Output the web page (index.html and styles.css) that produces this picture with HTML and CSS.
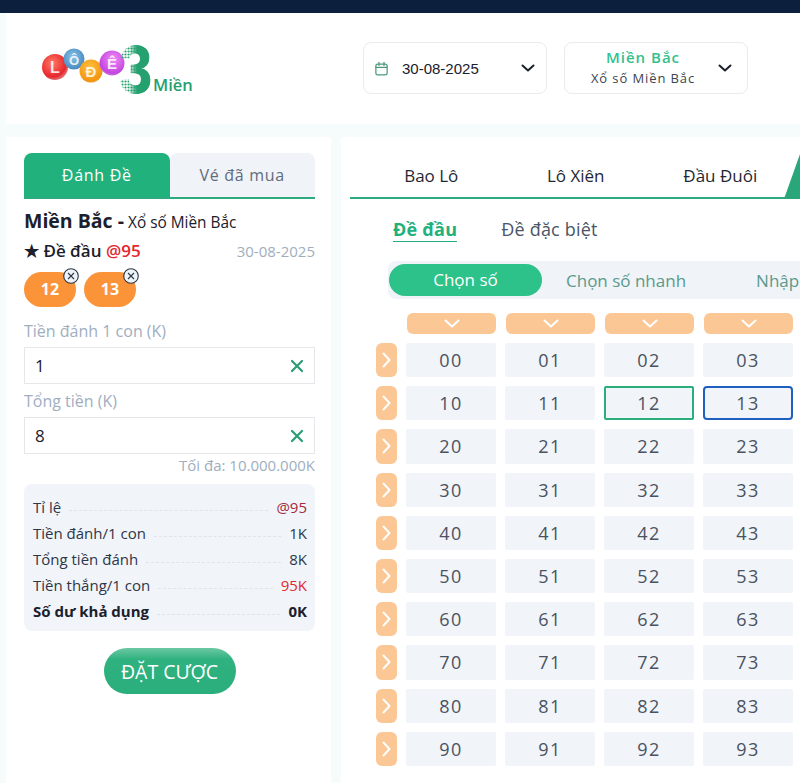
FILE: index.html
```html
<!DOCTYPE html>
<html lang="vi">
    <head>
        <meta charset="UTF-8" />
        <meta name="viewport" content="width=device-width, initial-scale=1.0" />
        <title>Lô Đề 3 Miền</title>
        <link rel="stylesheet" href="styles.css">
    </head>
    <body>
        <div class="topbar"></div>

        <header class="site-header">
            <svg class="logo" width="156" height="56" viewBox="0 0 156 56">
                <defs>
                    <pattern id="dots" width="3" height="3" patternUnits="userSpaceOnUse">
                        <circle cx="1.5" cy="1.5" r="1.1" fill="#25a06f" />
                    </pattern>
                    <linearGradient id="fade3" x1="0" x2="1" y1="0" y2="0">
                        <stop offset="0.3" stop-color="#25a06f" stop-opacity="0" />
                        <stop offset="0.55" stop-color="#25a06f" />
                    </linearGradient>
                    <radialGradient id="ballRed" cx="0.4" cy="0.35" r="0.75">
                        <stop offset="0" stop-color="#ff7a66" />
                        <stop offset="0.7" stop-color="#e8272d" />
                        <stop offset="1" stop-color="#d9a0a0" />
                    </radialGradient>
                    <radialGradient id="ballBlue" cx="0.45" cy="0.4" r="0.7">
                        <stop offset="0" stop-color="#8cc4e8" />
                        <stop offset="1" stop-color="#3b7fb8" />
                    </radialGradient>
                    <radialGradient id="ballOrange" cx="0.45" cy="0.35" r="0.75">
                        <stop offset="0" stop-color="#ffc23d" />
                        <stop offset="0.8" stop-color="#f29410" />
                        <stop offset="1" stop-color="#e8c08c" />
                    </radialGradient>
                    <radialGradient id="ballPink" cx="0.55" cy="0.35" r="0.75">
                        <stop offset="0" stop-color="#f08cf5" />
                        <stop offset="0.75" stop-color="#c344e0" />
                        <stop offset="1" stop-color="#d8b0e0" />
                    </radialGradient>
                </defs>
                <circle cx="15" cy="23" r="13" fill="url(#ballRed)" />
                <text x="15" y="29" class="ball-letter" font-size="16">L</text>
                <circle cx="34" cy="15" r="10.5" fill="url(#ballBlue)" />
                <text x="34" y="21" class="ball-letter" font-size="13">Ô</text>
                <circle cx="51" cy="27" r="11.5" fill="url(#ballOrange)" />
                <text x="51" y="33" class="ball-letter" font-size="15">Đ</text>
                <circle cx="72" cy="19" r="12.5" fill="url(#ballPink)" />
                <text x="72" y="25" class="ball-letter" font-size="15">Ê</text>
                <text x="79" y="49" class="logo-three" fill="url(#dots)" textLength="33" lengthAdjust="spacingAndGlyphs">3</text>
                <text x="79" y="49" class="logo-three solid" fill="url(#fade3)" stroke="url(#fade3)" textLength="33" lengthAdjust="spacingAndGlyphs">3</text>
                <text x="113" y="47" class="logo-mien">Miền</text>
            </svg>

            <div class="picker picker-date">
                <svg class="cal-icon" width="15" height="15" viewBox="0 0 24 24" fill="none" stroke="#4f9a7c" stroke-width="2" stroke-linecap="round">
                    <rect x="3" y="5" width="18" height="17" rx="3" />
                    <path d="M3 10h18M8 2v5M16 2v5" />
                </svg>
                <span class="date-value">30-08-2025</span>
                <svg class="chev" width="14" height="8" viewBox="0 0 14 8" fill="none" stroke="#1a202c" stroke-width="2" stroke-linecap="round" stroke-linejoin="round">
                    <path d="M1.5 1.5 7 6.5l5.5-5" />
                </svg>
            </div>

            <div class="picker picker-region">
                <div class="region-text">
                    <div class="region-name">Miền Bắc</div>
                    <div class="region-sub">Xổ số Miền Bắc</div>
                </div>
                <svg class="chev" width="14" height="8" viewBox="0 0 14 8" fill="none" stroke="#1a202c" stroke-width="2" stroke-linecap="round" stroke-linejoin="round">
                    <path d="M1.5 1.5 7 6.5l5.5-5" />
                </svg>
            </div>
        </header>

        <div class="content">
            <aside class="bet-panel">
                <div class="side-tabs">
                    <div class="side-tab active">Đánh Đề</div>
                    <div class="side-tab">Vé đã mua</div>
                </div>

                <div class="bet-title"><b>Miền Bắc -</b> <span>Xổ số Miền Bắc</span></div>
                <div class="bet-type">
                    <span>★ Đề đầu <em>@95</em></span>
                    <span class="bet-date">30-08-2025</span>
                </div>

                <div class="chips">
                    <div class="chip">12
                        <span class="chip-x"><svg width="16" height="16" viewBox="0 0 16 16" fill="#eef3f8" stroke="#2d3748" stroke-width="1.1"><circle cx="8" cy="8" r="7.3" /><path d="m5 5 6 6M11 5l-6 6" /></svg></span>
                    </div>
                    <div class="chip">13
                        <span class="chip-x"><svg width="16" height="16" viewBox="0 0 16 16" fill="#eef3f8" stroke="#2d3748" stroke-width="1.1"><circle cx="8" cy="8" r="7.3" /><path d="m5 5 6 6M11 5l-6 6" /></svg></span>
                    </div>
                </div>

                <label class="field-label">Tiền đánh 1 con (K)</label>
                <div class="field">
                    <span>1</span>
                    <svg width="14" height="14" viewBox="0 0 14 14" stroke="#2a9d74" stroke-width="2.2" stroke-linecap="round"><path d="m2 2 10 10M12 2 2 12" /></svg>
                </div>
                <label class="field-label second">Tổng tiền (K)</label>
                <div class="field">
                    <span>8</span>
                    <svg width="14" height="14" viewBox="0 0 14 14" stroke="#2a9d74" stroke-width="2.2" stroke-linecap="round"><path d="m2 2 10 10M12 2 2 12" /></svg>
                </div>
                <div class="max-note">Tối đa: 10.000.000K</div>

                <div class="summary">
                    <div class="summary-row"><span>Tỉ lệ</span><i></i><span class="rate">@95</span></div>
                    <div class="summary-row"><span>Tiền đánh/1 con</span><i></i><span>1K</span></div>
                    <div class="summary-row"><span>Tổng tiền đánh</span><i></i><span>8K</span></div>
                    <div class="summary-row"><span>Tiền thắng/1 con</span><i></i><span class="win">95K</span></div>
                    <div class="summary-row strong"><span>Số dư khả dụng</span><i></i><span>0K</span></div>
                </div>

                <button class="place-bet">ĐẶT CƯỢC</button>
            </aside>

            <main class="board">
                <nav class="game-tabs">
                    <div class="game-tab">Bao Lô</div>
                    <div class="game-tab">Lô Xiên</div>
                    <div class="game-tab">Đầu Đuôi</div>
                    <div class="game-tab-active"></div>
                </nav>

                <div class="sub-tabs">
                    <span class="sub-tab active">Đề đầu</span>
                    <span class="sub-tab">Đề đặc biệt</span>
                </div>

                <div class="modes">
                    <div class="mode active">Chọn số</div>
                    <div class="mode quick">Chọn số nhanh</div>
                    <div class="mode">Nhập số</div>
                </div>

                <div class="numbers">
                    <span></span>
                    <div class="col-head"><svg width="16" height="9" viewBox="0 0 16 9"><path d="m1.5 1.5 6.5 6 6.5-6" /></svg></div>
                    <div class="col-head"><svg width="16" height="9" viewBox="0 0 16 9"><path d="m1.5 1.5 6.5 6 6.5-6" /></svg></div>
                    <div class="col-head"><svg width="16" height="9" viewBox="0 0 16 9"><path d="m1.5 1.5 6.5 6 6.5-6" /></svg></div>
                    <div class="col-head"><svg width="16" height="9" viewBox="0 0 16 9"><path d="m1.5 1.5 6.5 6 6.5-6" /></svg></div>

                    <div class="row-head"><svg width="9" height="16" viewBox="0 0 9 16"><path d="m1.5 1.5 6 6.5-6 6.5" /></svg></div>
                    <div class="num">00</div><div class="num">01</div><div class="num">02</div><div class="num">03</div>
                    <div class="row-head"><svg width="9" height="16" viewBox="0 0 9 16"><path d="m1.5 1.5 6 6.5-6 6.5" /></svg></div>
                    <div class="num">10</div><div class="num">11</div><div class="num picked">12</div><div class="num focused">13</div>
                    <div class="row-head"><svg width="9" height="16" viewBox="0 0 9 16"><path d="m1.5 1.5 6 6.5-6 6.5" /></svg></div>
                    <div class="num">20</div><div class="num">21</div><div class="num">22</div><div class="num">23</div>
                    <div class="row-head"><svg width="9" height="16" viewBox="0 0 9 16"><path d="m1.5 1.5 6 6.5-6 6.5" /></svg></div>
                    <div class="num">30</div><div class="num">31</div><div class="num">32</div><div class="num">33</div>
                    <div class="row-head"><svg width="9" height="16" viewBox="0 0 9 16"><path d="m1.5 1.5 6 6.5-6 6.5" /></svg></div>
                    <div class="num">40</div><div class="num">41</div><div class="num">42</div><div class="num">43</div>
                    <div class="row-head"><svg width="9" height="16" viewBox="0 0 9 16"><path d="m1.5 1.5 6 6.5-6 6.5" /></svg></div>
                    <div class="num">50</div><div class="num">51</div><div class="num">52</div><div class="num">53</div>
                    <div class="row-head"><svg width="9" height="16" viewBox="0 0 9 16"><path d="m1.5 1.5 6 6.5-6 6.5" /></svg></div>
                    <div class="num">60</div><div class="num">61</div><div class="num">62</div><div class="num">63</div>
                    <div class="row-head"><svg width="9" height="16" viewBox="0 0 9 16"><path d="m1.5 1.5 6 6.5-6 6.5" /></svg></div>
                    <div class="num">70</div><div class="num">71</div><div class="num">72</div><div class="num">73</div>
                    <div class="row-head"><svg width="9" height="16" viewBox="0 0 9 16"><path d="m1.5 1.5 6 6.5-6 6.5" /></svg></div>
                    <div class="num">80</div><div class="num">81</div><div class="num">82</div><div class="num">83</div>
                    <div class="row-head"><svg width="9" height="16" viewBox="0 0 9 16"><path d="m1.5 1.5 6 6.5-6 6.5" /></svg></div>
                    <div class="num">90</div><div class="num">91</div><div class="num">92</div><div class="num">93</div>
                </div>
            </main>
        </div>
    </body>
</html>
```

FILE: styles.css
```css
html,
body {
    height: 783px;
    overflow: hidden;
}

body {
    font-family: "Open Sans", "Noto Sans", sans-serif;
    margin: 0;
    padding: 0;
    background-color: #f6fbfb;
    color: #1a202c;
}

.topbar {
    height: 13px;
    background-color: #0c1f3c;
}

.site-header {
    display: flex;
    align-items: center;
    height: 111px;
    margin-left: 6px;
    background-color: #fff;
}

.logo {
    flex: none;
    margin: 6px 0 0 34px;
    overflow: visible;
}

.ball-letter {
    font-family: "Liberation Sans", sans-serif;
    font-weight: 700;
    fill: #fff;
    fill-opacity: 0.85;
    text-anchor: middle;
}

.logo-three {
    font-family: "Liberation Sans", sans-serif;
    font-weight: 700;
    font-size: 68px;
}

.logo-three.solid {
    stroke-width: 1.2px;
}

.logo-mien {
    font-family: "Open Sans", sans-serif;
    font-weight: 600;
    font-size: 16.5px;
    fill: #25a06f;
}

.picker {
    display: flex;
    align-items: center;
    box-sizing: border-box;
    height: 52px;
    margin-bottom: 1px;
    background-color: #fff;
    border: 1px solid #e9ebee;
    border-radius: 8px;
}

.picker-date {
    width: 184px;
    margin-left: 167px;
    padding: 0 11px 0 10px;
}

.cal-icon {
    flex: none;
}

.date-value {
    flex: 1;
    margin-left: 13px;
    font-family: "Liberation Sans", sans-serif;
    font-size: 15px;
}

.picker-region {
    width: 184px;
    margin-left: 17px;
    padding: 0 15px 0 3px;
}

.region-text {
    flex: 1;
    text-align: center;
    letter-spacing: 1px;
}

.region-name {
    font-size: 15px;
    line-height: 20px;
    font-weight: 600;
    color: #34c08c;
}

.region-sub {
    font-size: 13px;
    line-height: 22px;
    letter-spacing: 0.9px;
    color: #3d4451;
}

.content {
    display: flex;
    gap: 10px;
    margin: 13px 0 0 6px;
}

.bet-panel {
    flex: none;
    box-sizing: border-box;
    width: 325px;
    height: 660px;
    padding: 16px 16px 0 18px;
    background-color: #fff;
}

.side-tabs {
    display: flex;
    height: 44px;
    border-bottom: 2px solid #2eaa7f;
}

.side-tab {
    flex: 1;
    display: flex;
    align-items: center;
    justify-content: center;
    font-size: 16px;
    letter-spacing: 0.7px;
    color: #5f6b7e;
    background-color: #f0f3f8;
    border-radius: 8px 8px 0 0;
}

.side-tab.active {
    color: #fff;
    background-color: #21b17c;
}

.bet-title {
    margin-top: 9px;
    line-height: 26px;
    font-size: 15.4px;
}

.bet-title b {
    font-size: 19.5px;
}

.bet-type {
    display: flex;
    align-items: center;
    justify-content: space-between;
    margin-top: 2px;
    line-height: 26px;
    font-size: 17px;
    font-weight: 600;
}

.bet-type em {
    font-style: normal;
    color: #e3262f;
}

.bet-date {
    font-size: 15px;
    font-weight: 400;
    color: #a0aec0;
}

.chips {
    display: flex;
    gap: 8px;
    margin-top: 8px;
}

.chip {
    position: relative;
    width: 52px;
    height: 35px;
    line-height: 35px;
    text-align: center;
    font-size: 16px;
    font-weight: 700;
    color: #fff;
    background-color: #fb9438;
    border-radius: 18px;
}

.chip-x {
    position: absolute;
    top: -4px;
    right: -3px;
    width: 16px;
    height: 16px;
    line-height: 0;
}

.field-label {
    display: block;
    margin-top: 12px;
    line-height: 24px;
    font-size: 16px;
    color: #a0aec0;
}

.field-label.second {
    margin-top: 5px;
}

.field {
    display: flex;
    align-items: center;
    justify-content: space-between;
    box-sizing: border-box;
    height: 37px;
    margin-top: 4px;
    padding: 0 10px;
    font-size: 17px;
    border: 1px solid #e5e7eb;
}

.max-note {
    margin-top: 1px;
    line-height: 20px;
    text-align: right;
    font-size: 15px;
    color: #a0aec0;
}

.summary {
    box-sizing: border-box;
    height: 147px;
    margin-top: 9px;
    padding: 10px 8px 0 9px;
    background-color: #f1f4f9;
    border-radius: 8px;
}

.summary-row {
    display: flex;
    align-items: center;
    height: 26px;
    font-size: 15px;
    color: #2d3748;
}

.summary-row i {
    flex: 1;
    height: 0;
    margin: 7px 8px 0 8px;
    border-bottom: 1px dashed #e0e4ea;
}

.summary-row .rate {
    color: #a52a3a;
}

.summary-row .win {
    color: #e3262f;
}

.summary-row.strong {
    font-weight: 700;
    color: #1a202c;
}

.place-bet {
    display: block;
    width: 132px;
    height: 46px;
    margin: 17px auto 0;
    padding: 0;
    font-family: inherit;
    font-size: 19.5px;
    color: #fff;
    background: linear-gradient(#6cc8a2, #2fb280 25%, #2aae7c);
    border: none;
    border-radius: 23px;
}

.board {
    flex: 1;
    min-width: 0;
    box-sizing: border-box;
    height: 660px;
    padding: 17px 0 0 9px;
    overflow: hidden;
    background-color: #fff;
}

.game-tabs {
    position: relative;
    display: flex;
    height: 43px;
    width: 450px;
    padding-left: 9px;
    border-bottom: 2px solid #2eaa7f;
}

.game-tab {
    display: flex;
    flex: none;
    width: 144.5px;
    align-items: center;
    justify-content: center;
    font-size: 17px;
    color: #1f2733;
}

.game-tab-active {
    position: absolute;
    left: 434px;
    bottom: -2px;
    width: 40px;
    height: 45px;
    background-color: #2aa67b;
    clip-path: polygon(16px 0, 100% 0, 100% 100%, 0 100%);
}

.sub-tabs {
    display: flex;
    gap: 44px;
    margin: 18px 0 0 43px;
    height: 26px;
}

.sub-tab {
    height: 24px;
    line-height: 24px;
    font-size: 18px;
    letter-spacing: 0.2px;
    color: #4a5568;
}

.sub-tab.active {
    font-weight: 700;
    color: #21b17c;
    border-bottom: 1px solid #21b17c;
}

.modes {
    display: flex;
    align-items: center;
    box-sizing: border-box;
    width: 460px;
    height: 38px;
    margin: 18px 0 0 38px;
    padding-left: 1px;
    background-color: #f0f3f8;
    border-radius: 8px 0 0 8px;
}

.mode {
    flex: none;
    white-space: nowrap;
    font-size: 17px;
    color: #5a9a8c;
}

.mode.active {
    width: 153px;
    height: 32px;
    line-height: 32px;
    text-align: center;
    color: #fff;
    background-color: #2cc28a;
    border-radius: 16px;
}

.mode.quick {
    margin: 0 70px 0 24px;
}

.numbers {
    display: grid;
    grid-template-columns: 21px repeat(4, 90px);
    grid-template-rows: 21px repeat(10, 34.2px);
    gap: 9px;
    margin: 14px 0 0 26px;
}

.col-head {
    display: flex;
    align-items: center;
    justify-content: center;
    margin-left: 1px;
    background-color: #fbc795;
    border-radius: 6px;
}

.row-head {
    display: flex;
    align-items: center;
    justify-content: center;
    background-color: #fbc795;
    border-radius: 6px;
}

.col-head path,
.row-head path {
    fill: none;
    stroke: #fff;
    stroke-width: 2;
    stroke-linecap: round;
    stroke-linejoin: round;
}

.num {
    display: flex;
    align-items: center;
    justify-content: center;
    box-sizing: border-box;
    font-size: 18px;
    letter-spacing: 1.5px;
    color: #4a5260;
    background-color: #f1f4f9;
    border-radius: 2px;
}

.num.picked {
    border: 2px solid #2aae7c;
}

.num.focused {
    border: 2px solid #1e5fbf;
    border-radius: 4px;
}
```
